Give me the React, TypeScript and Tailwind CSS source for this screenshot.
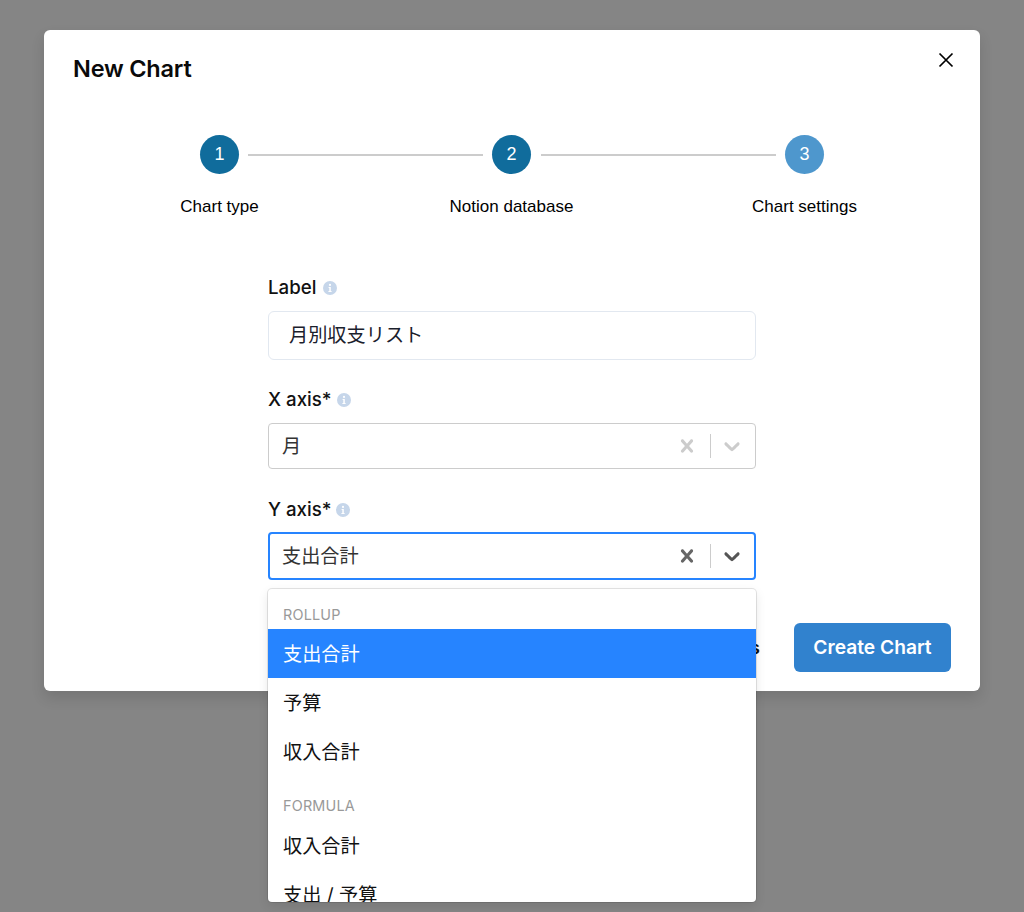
import React from "react";

const jp = "font-['Inter','Noto_Sans_CJK_JP',sans-serif]";

function Info() {
  return (
    <svg width="14" height="14" viewBox="0 0 14 14" className="shrink-0">
      <circle cx="7" cy="7" r="7" fill="#c6d6ea" />
      <circle cx="7" cy="3.9" r="1.1" fill="#fff" />
      <path d="M5.6 6h2.2v3.9h.8v1H5.4v-1h.9V7h-.7z" fill="#fff" />
    </svg>
  );
}

function Step({ n, label, light }: { n: number; label: string; light?: boolean }) {
  return (
    <div className="w-[39px] flex flex-col items-center shrink-0">
      <div
        className={`w-[39px] h-[39px] rounded-full flex items-center justify-center text-white text-[18px] font-['Liberation_Sans',sans-serif] ${
          light ? "bg-[#4e97cd]" : "bg-[#106c9c]"
        }`}
      >
        {n}
      </div>
      <div className="mt-[22px] h-[22px] leading-[22px] text-[17px] text-black whitespace-nowrap font-['Liberation_Sans',sans-serif]">
        {label}
      </div>
    </div>
  );
}

function FieldLabel({ text, gapClass }: { text: string; gapClass: string }) {
  return (
    <div className={`flex items-center ${gapClass} h-[24px] text-[18.7px] font-medium leading-[24px] text-[#111]`}>
      <span>{text}</span>
      <Info />
    </div>
  );
}

function SelectIcons({ active }: { active?: boolean }) {
  const x = active ? "#666666" : "#cccccc";
  const c = active ? "#555555" : "#cccccc";
  return (
    <div className="flex items-center">
      <svg width="26" height="26" viewBox="0 0 20 20" className="mr-[10px]" fill={x}>
        <path d="M14.348 14.849c-.469.469-1.229.469-1.697 0L10 11.819l-2.651 3.029c-.469.469-1.229.469-1.697 0-.469-.469-.469-1.229 0-1.697l2.758-3.15-2.759-3.152c-.469-.469-.469-1.228 0-1.697s1.228-.469 1.697 0L10 8.183l2.651-3.031c.469-.469 1.228-.469 1.697 0s.469 1.229 0 1.697l-2.758 3.152 2.758 3.15c.469.469.469 1.229 0 1.698z" />
      </svg>
      <div className="w-px h-[24px] bg-[#cccccc]" />
      <svg width="26" height="26" viewBox="0 0 20 20" className="ml-[8px]" fill={c}>
        <path d="M4.516 7.548c.436-.446 1.043-.481 1.576 0L10 11.295l3.908-3.747c.533-.481 1.141-.446 1.574 0 .436.445.408 1.197 0 1.615-.406.418-4.695 4.502-4.695 4.502-.217.223-.502.335-.787.335s-.57-.112-.789-.335c0 0-4.287-4.084-4.695-4.502s-.436-1.17 0-1.615z" />
      </svg>
    </div>
  );
}

function Option({ text, selected }: { text: string; selected?: boolean }) {
  return (
    <div
      className={`h-[49px] shrink-0 px-[15px] pt-[1px] flex items-center text-[19.2px] ${
        selected ? "bg-[#2684ff] text-white" : "text-[#111]"
      }`}
    >
      {text}
    </div>
  );
}

export default function App() {
  return (
    <div className={`w-[1024px] h-[912px] overflow-hidden bg-[#858585] pt-[30px] pl-[44px] ${jp}`}>
      <div className="relative w-[936px] h-[661px] bg-white rounded-[6px] shadow-[0_7px_14px_rgba(0,0,0,0.12)]">
        <div className="flex justify-between items-start pl-[29px] pr-[24px] pt-[22px] h-[105px]">
          <div className="text-[23.5px] font-semibold leading-[34px] text-[#0a0a0a] tracking-[-0.2px]">New Chart</div>
          <svg width="20" height="20" viewBox="0 0 20 20" className="mt-[-2px] text-black" fill="none" stroke="currentColor" strokeWidth="1.7">
            <path d="M3.5 3.5l13 13M16.5 3.5l-13 13" />
          </svg>
        </div>

        <div className="flex items-start justify-center">
          <Step n={1} label="Chart type" />
          <div className="w-[235px] h-[2px] bg-[#cccccc] mt-[19px] ml-[9px] mr-[9px]" />
          <Step n={2} label="Notion database" />
          <div className="w-[235px] h-[2px] bg-[#cccccc] mt-[19px] ml-[10px] mr-[9px]" />
          <Step n={3} label="Chart settings" light />
        </div>

        <div className="w-[488px] ml-[224px] mt-[58px]">
          <FieldLabel text="Label" gapClass="gap-[7px]" />
          <div className="mt-[11px] h-[49px] border border-[#e2e8f0] rounded-[6px] px-[20px] flex items-center text-[19.2px] text-[#1a202c]">
            月別収支リスト
          </div>

          <div className="mt-[28px]">
            <FieldLabel text="X axis*" gapClass="gap-[5px]" />
          </div>
          <div className="mt-[11px] h-[46px] border border-[#cccccc] rounded-[4px] pl-[13px] pr-[10px] flex items-center justify-between text-[19.2px] text-[#333]">
            <span>月</span>
            <SelectIcons />
          </div>

          <div className="mt-[29px]">
            <FieldLabel text="Y axis*" gapClass="gap-[4px]" />
          </div>
          <div className="mt-[10px] h-[48px] border-2 border-[#2684ff] rounded-[4px] pl-[12px] pr-[9px] flex items-center justify-between text-[19.2px] text-[#333]">
            <span>支出合計</span>
            <SelectIcons active />
          </div>
        </div>

        <div className="absolute right-[29px] bottom-[19px] flex items-center gap-[34px]">
          <span className="text-[18px] font-semibold text-[#111]">Previous</span>
          <button className="w-[157px] h-[49px] rounded-[6px] bg-[#3182ce] text-white text-[19.2px] font-semibold">
            Create Chart
          </button>
        </div>

        <div className="absolute left-[224px] top-[559px] w-[488px] h-[313px] bg-white rounded-[4px] overflow-hidden flex flex-col shadow-[0_0_0_1px_rgba(0,0,0,0.1),0_4px_11px_rgba(0,0,0,0.1)]">
          <div className="h-[40px] shrink-0 px-[15px] pt-[16px] text-[14.4px] leading-[20px] font-normal text-[#999999] tracking-[0.2px]">
            ROLLUP
          </div>
          <Option text="支出合計" selected />
          <Option text="予算" />
          <Option text="収入合計" />
          <div className="h-[45px] shrink-0 px-[15px] pt-[20px] text-[14.4px] leading-[20px] font-normal text-[#999999] tracking-[0.2px]">
            FORMULA
          </div>
          <Option text="収入合計" />
          <Option text="支出 / 予算" />
        </div>
      </div>
    </div>
  );
}
